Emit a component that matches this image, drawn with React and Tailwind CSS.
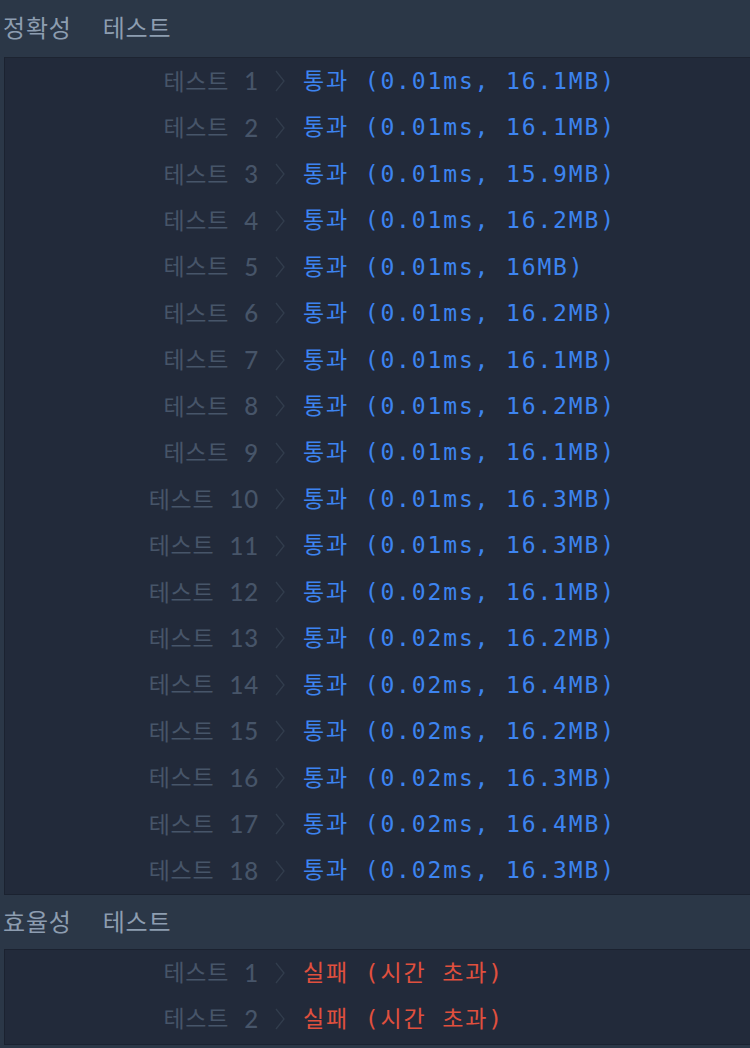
const accuracy = [
  ['0.01ms', '16.1MB'],
  ['0.01ms', '16.1MB'],
  ['0.01ms', '15.9MB'],
  ['0.01ms', '16.2MB'],
  ['0.01ms', '16MB'],
  ['0.01ms', '16.2MB'],
  ['0.01ms', '16.1MB'],
  ['0.01ms', '16.2MB'],
  ['0.01ms', '16.1MB'],
  ['0.01ms', '16.3MB'],
  ['0.01ms', '16.3MB'],
  ['0.02ms', '16.1MB'],
  ['0.02ms', '16.2MB'],
  ['0.02ms', '16.4MB'],
  ['0.02ms', '16.2MB'],
  ['0.02ms', '16.3MB'],
  ['0.02ms', '16.4MB'],
  ['0.02ms', '16.3MB'],
]

const sans = "font-['Lato','Noto_Sans_CJK_KR',sans-serif]"
const mono = "font-['DejaVu_Sans_Mono','Noto_Sans_CJK_KR',monospace]"

function Chevron() {
  return (
    <svg width="14" height="26" viewBox="0 0 14 26" className="shrink-0">
      <polyline points="3,3 11,13 3,23" fill="none" stroke="#323d4d" strokeWidth="1.3" />
    </svg>
  )
}

function Row({ n, children, height = 'h-[46.45px]' }) {
  return (
    <div className={`flex items-center ${height}`}>
      <div className={`w-[254px] flex justify-end items-center text-[23px] leading-none tracking-[0.8px] text-[#475569] ${sans}`}>
        <span>테스트</span>
        <span className="ml-[15px] text-[24px] font-medium">{n}</span>
      </div>
      <div className="ml-[14px] mr-[16px] flex items-center">
        <Chevron />
      </div>
      {children}
    </div>
  )
}

function Header({ title }) {
  return (
    <div className={`flex items-center text-[24px] tracking-[0.8px] text-[#8d9db0] ${sans}`}>
      <span>{title}</span>
      <span className="ml-[31px]">테스트</span>
    </div>
  )
}

export default function App() {
  return (
    <div className="w-[750px] h-[1048px] overflow-hidden bg-[#2b3747]">
      <div className="h-[57px] flex items-center pl-[3px] pb-[1px]">
        <Header title="정확성" />
      </div>
      <div className="ml-[4px] w-[760px] bg-[#222a3a] border border-[#1b2230] border-t-[#1d2431]">
        {accuracy.map(([ms, mb], i) => (
          <Row key={i} n={i + 1}>
            <span className={`text-[23px] tracking-[1.85px] text-[#3d84f0] whitespace-pre ${mono}`}>
              통과 ({ms}, {mb})
            </span>
          </Row>
        ))}
      </div>
      <div className="h-[54px] flex items-center pl-[3px]">
        <Header title="효율성" />
      </div>
      <div className="ml-[4px] w-[760px] bg-[#222a3a] border border-[#1b2230] pb-[2px]">
        {[1, 2].map((n) => (
          <Row key={n} n={n} height="h-[46px]">
            <span className={`text-[23px] tracking-[1.85px] text-[#e0503e] whitespace-pre ${mono}`}>
              실패 (시간 초과)
            </span>
          </Row>
        ))}
      </div>
    </div>
  )
}
